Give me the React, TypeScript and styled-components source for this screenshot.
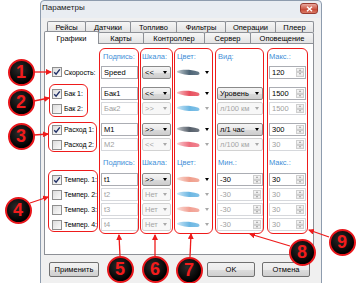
import React from "react";
import styled, { createGlobalStyle } from "styled-components";

const GlobalStyle = createGlobalStyle`
  html, body { margin: 0; padding: 0; background: #ffffff; }
  body { font-family: "Liberation Sans", Arial, sans-serif; color: #000; }
  * { box-sizing: border-box; }
`;

const Page = styled.div`
  position: relative;
  width: 364px;
  height: 283px;
  overflow: hidden;
  background: #fff;
`;

const Window = styled.div`
  margin-left: 40px;
  width: 282px;
  height: 300px;
  border: 1px solid #8e9cae;
  border-radius: 4px 4px 0 0;
  background: #e9edf2;
  display: flex;
  flex-direction: column;
`;

const TitleBar = styled.div`
  height: 17px;
  display: flex;
  align-items: flex-start;
  justify-content: space-between;
  padding: 2px 3px 0 1px;
  font-size: 8px;
  color: #1a1a1a;
`;

const TitleText = styled.span`
  line-height: 10px;
`;

const CloseButton = styled.div`
  width: 18px;
  height: 11px;
  border-radius: 3px;
  border: 1px solid #9a3b30;
  background: linear-gradient(#e9a99e, #d0604f 50%, #c4412e 51%, #d97a66);
  display: flex;
  align-items: center;
  justify-content: center;
`;

const Client = styled.div`
  flex: 1;
  padding: 3px 0 0 3px;
  display: flex;
  flex-direction: column;
  background: #f0f0f0;
`;

const TabRow = styled.div<{ $indent: number }>`
  display: flex;
  height: 11px;
  padding-left: ${(p) => p.$indent}px;
`;

const Tab = styled.div<{ $w: number; $active?: boolean }>`
  position: relative;
  z-index: ${(p) => (p.$active ? 2 : 1)};
  width: ${(p) => p.$w}px;
  height: ${(p) => (p.$active ? 13 : 11)}px;
  margin-top: ${(p) => (p.$active ? -1 : 0)}px;
  margin-right: -1px;
  border: 1px solid #8d9096;
  border-bottom: none;
  border-radius: 2px 2px 0 0;
  background: ${(p) => (p.$active ? "#ffffff" : "linear-gradient(#f6f6f6, #e3e3e3)")};
  font-size: 7.5px;
  display: flex;
  align-items: center;
  justify-content: center;
  white-space: nowrap;
`;

const Panel = styled.div`
  position: relative;
  z-index: 1;
  width: 270px;
  height: 212px;
  border: 1px solid #8d9096;
  background: #ffffff;
  padding: 4px 0 0 3px;
`;

const Grid = styled.div`
  display: grid;
  grid-template-columns: 51px 41px 34px 40px 52px 43px;
  grid-template-rows: 16px 16px 6px 15px 15px 6px 15px 15px 20px 15px 15px 15px 15px 2px;
`;

const Slot = styled.div<{ $row: number; $col: number; $pl?: number }>`
  grid-row: ${(p) => p.$row};
  grid-column: ${(p) => p.$col};
  display: flex;
  align-items: center;
  padding-left: ${(p) => p.$pl ?? 0}px;
  min-width: 0;
`;

const Header = styled.span`
  font-size: 7.5px;
  color: #3f8fd8;
  white-space: nowrap;
`;

const LabelCell = styled.label<{ $row: number }>`
  grid-row: ${(p) => p.$row};
  grid-column: 1;
  display: flex;
  align-items: center;
  gap: 2px;
  padding-left: 4px;
  font-size: 7px;
  letter-spacing: -0.1px;
  white-space: nowrap;
`;

const CheckBox = styled.span`
  width: 10px;
  height: 10px;
  flex: none;
  border: 1px solid #8f8f8f;
  background: linear-gradient(135deg, #dcdcdc, #fbfbfb);
  display: inline-flex;
  align-items: center;
  justify-content: center;
`;

const Callout = styled.div<{
  $rows: string;
  $col: number;
  $ml?: number;
  $w?: number;
  $mt?: number;
  $mb?: number;
}>`
  grid-row: ${(p) => p.$rows};
  grid-column: ${(p) => p.$col};
  margin: ${(p) => p.$mt ?? 0}px 0 ${(p) => p.$mb ?? 0}px ${(p) => p.$ml ?? 0}px;
  width: ${(p) => (p.$w ? `${p.$w}px` : "auto")};
  border: 1.5px solid #ee1b1b;
  border-radius: 6px;
  pointer-events: none;
  z-index: 3;
`;

const TextBox = styled.div<{ $on: boolean }>`
  margin-left: 2px;
  width: 37px;
  height: 13px;
  border: 1px solid ${(p) => (p.$on ? "#abadb3" : "#d6d8dc")};
  background: #fff;
  color: ${(p) => (p.$on ? "#000" : "#a0a0a0")};
  font-size: 7.5px;
  padding-left: 2px;
  display: flex;
  align-items: center;
`;

const Combo = styled.div<{ $on: boolean; $w: number; $ml: number }>`
  margin-left: ${(p) => p.$ml}px;
  width: ${(p) => p.$w}px;
  height: 13px;
  border: 1px solid ${(p) => (p.$on ? "#8a8a8a" : "#d2d2d2")};
  border-radius: 2px;
  background: ${(p) =>
    p.$on
      ? "linear-gradient(#f5f5f5 0%, #e9e9e9 50%, #dadada 51%, #cdcdcd 100%)"
      : "#f7f7f7"};
  color: ${(p) => (p.$on ? "#000" : "#a5a5a5")};
  font-size: 7.5px;
  display: flex;
  align-items: center;
  justify-content: space-between;
  padding: 0 3px 0 2px;
  white-space: nowrap;
`;

const DropArrow = styled.span<{ $on: boolean }>`
  width: 0;
  height: 0;
  flex: none;
  border-left: 2.5px solid transparent;
  border-right: 2.5px solid transparent;
  border-top: 3px solid ${(p) => (p.$on ? "#000" : "#a8a8a8")};
`;

const ColorPick = styled.div`
  margin-left: 2px;
  width: 36px;
  height: 13px;
  display: flex;
  align-items: center;
  justify-content: space-between;
  padding-right: 3px;
`;

const Spin = styled.div<{ $on: boolean; $w: number; $ml: number }>`
  margin-left: ${(p) => p.$ml}px;
  width: ${(p) => p.$w}px;
  height: 13px;
  border: 1px solid ${(p) => (p.$on ? "#abadb3" : "#d6d8dc")};
  background: #fff;
  color: ${(p) => (p.$on ? "#000" : "#a0a0a0")};
  font-size: 7.5px;
  display: flex;
  align-items: stretch;
`;

const SpinText = styled.span`
  flex: 1;
  padding-left: 2px;
  display: flex;
  align-items: center;
`;

const SpinButtons = styled.div`
  width: 8px;
  margin: 1px;
  display: flex;
  flex-direction: column;
`;

const SpinBtn = styled.span<{ $up?: boolean }>`
  flex: 1;
  border: 1px solid #cfcfcf;
  background: linear-gradient(#f7f7f7, #e6e6e6);
  display: flex;
  align-items: center;
  justify-content: center;
  &::after {
    content: "";
    width: 0;
    height: 0;
    border-left: 1.5px solid transparent;
    border-right: 1.5px solid transparent;
    ${(p) => (p.$up ? "border-bottom: 2px solid #9a9a9a;" : "border-top: 2px solid #9a9a9a;")}
  }
`;

const ButtonBar = styled.div`
  display: flex;
  width: 270px;
  margin-top: 7px;
  padding: 0 4px 0 5px;
  gap: 7px;
`;

const Button = styled.div<{ $push?: boolean; $w: number }>`
  margin-left: ${(p) => (p.$push ? "auto" : "0")};
  width: ${(p) => p.$w}px;
  height: 15px;
  border: 1px solid #707070;
  border-radius: 2px;
  background: linear-gradient(#f2f2f2 0%, #ebebeb 50%, #dddddd 51%, #cfcfcf 100%);
  font-size: 7.5px;
  display: flex;
  align-items: center;
  justify-content: center;
`;

const Overlay = styled.svg`
  position: absolute;
  left: 0;
  top: 0;
  pointer-events: none;
  z-index: 10;
`;

const Badge = styled.div<{ $x: number; $y: number }>`
  position: absolute;
  z-index: 11;
  left: ${(p) => p.$x - 13.5}px;
  top: ${(p) => p.$y - 13.5}px;
  width: 27px;
  height: 27px;
  border-radius: 50%;
  border: 2px solid #e8161b;
  background: radial-gradient(circle at 40% 35%, #2b2b2b, #000 70%);
  color: #f21c1c;
  font: bold 18px "Liberation Sans", Arial, sans-serif;
  display: flex;
  align-items: center;
  justify-content: center;
`;

type Row = {
  row: number;
  label: string;
  checked: boolean;
  sign: string;
  scale: string;
  color: string;
  on: boolean;
  kind?: string;
  min?: string;
  max: string;
};

const topRows: Row[] = [
  { row: 2, label: "Скорость:", checked: true, sign: "Speed", scale: "<<", color: "#4e6576", on: true, max: "120" },
  { row: 4, label: "Бак 1:", checked: true, sign: "Бак1", scale: "<<", color: "#e8505e", on: true, kind: "Уровень", max: "1500" },
  { row: 5, label: "Бак 2:", checked: false, sign: "Бак2", scale: ">>", color: "#6cb7e3", on: false, kind: "л/100 км", max: "1500" },
  { row: 7, label: "Расход 1:", checked: true, sign: "M1", scale: ">>", color: "#555f6a", on: true, kind: "л/1 час", max: "300" },
  { row: 8, label: "Расход 2:", checked: false, sign: "M2", scale: "<<", color: "#ee6f7e", on: false, kind: "л/100 км", max: "30" },
  { row: 10, label: "Темпер. 1:", checked: true, sign: "t1", scale: ">>", color: "#f09e8c", on: true, min: "-30", max: "30" },
  { row: 11, label: "Темпер. 2:", checked: false, sign: "t2", scale: "Нет", color: "#6cb7e3", on: false, min: "-30", max: "30" },
  { row: 12, label: "Темпер. 3:", checked: false, sign: "t3", scale: "Нет", color: "#f2a093", on: false, min: "-30", max: "30" },
  { row: 13, label: "Темпер. 4:", checked: false, sign: "t4", scale: "Нет", color: "#6cb7e3", on: false, min: "-30", max: "30" },
];

const tabs1 = [
  { t: "Рейсы", w: 39 },
  { t: "Датчики", w: 46 },
  { t: "Топливо", w: 47 },
  { t: "Фильтры", w: 50 },
  { t: "Операции", w: 51 },
  { t: "Плеер", w: 39 },
];
const tabs2 = [
  { t: "Графики", w: 55, a: true },
  { t: "Карты", w: 46 },
  { t: "Контроллер", w: 62 },
  { t: "Сервер", w: 47 },
  { t: "Оповещение", w: 64 },
];

const Blob: React.FC<{ color: string; id: string }> = ({ color, id }) => (
  <svg width="25" height="9" viewBox="0 0 25 9">
    <defs>
      <linearGradient id={id} x1="0" y1="0" x2="1" y2="0">
        <stop offset="0" stopColor={color} stopOpacity="0.35" />
        <stop offset="0.55" stopColor={color} stopOpacity="1" />
        <stop offset="1" stopColor={color} stopOpacity="0.85" />
      </linearGradient>
      <filter id={id + "f"} x="-20%" y="-40%" width="140%" height="180%">
        <feGaussianBlur stdDeviation="0.45" />
      </filter>
    </defs>
    <path
      d="M1 3.2 C 6 1.2, 15 1.6, 21.5 3.4 C 24 4.1, 24.3 6.6, 21.5 6.9 C 14 7.6, 6 6.2, 1.3 4.4 Z"
      fill={`url(#${id})`}
      filter={`url(#${id}f)`}
    />
  </svg>
);

const Check: React.FC = () => (
  <svg width="8" height="8" viewBox="0 0 8 8">
    <path d="M1.2 4.2 L3.1 6.2 L6.8 1.4" fill="none" stroke="#1f2f66" strokeWidth="1.4" />
  </svg>
);

const SpinBox: React.FC<{ value: string; on: boolean; w: number; ml: number }> = ({ value, on, w, ml }) => (
  <Spin $on={on} $w={w} $ml={ml}>
    <SpinText>{value}</SpinText>
    <SpinButtons>
      <SpinBtn $up />
      <SpinBtn />
    </SpinButtons>
  </Spin>
);

const badges = [
  { n: "1", x: 21, y: 72 },
  { n: "2", x: 21, y: 102 },
  { n: "3", x: 21, y: 136 },
  { n: "4", x: 18, y: 210 },
  { n: "5", x: 120, y: 269 },
  { n: "6", x: 155, y: 269 },
  { n: "7", x: 189, y: 270 },
  { n: "8", x: 302, y: 252 },
  { n: "9", x: 342, y: 242 },
];

const arrows = [
  [34, 72, 51, 72],
  [34, 101, 49, 98],
  [34, 135, 48, 134],
  [30, 203, 48, 197],
  [120, 256, 119, 235],
  [155, 256, 155, 235],
  [190, 257, 191, 234],
  [290, 246, 250, 234],
  [329, 237, 309, 230],
];

export default function App() {
  return (
    <Page>
      <GlobalStyle />
      <Window>
        <TitleBar>
          <TitleText>Параметры</TitleText>
          <CloseButton>
            <svg width="7" height="6" viewBox="0 0 7 6">
              <path d="M1 0.8 L6 5.2 M6 0.8 L1 5.2" stroke="#fff" strokeWidth="1.5" />
            </svg>
          </CloseButton>
        </TitleBar>
        <Client>
          <TabRow $indent={3}>
            {tabs1.map((t) => (
              <Tab key={t.t} $w={t.w}>
                {t.t}
              </Tab>
            ))}
          </TabRow>
          <TabRow $indent={0}>
            {tabs2.map((t) => (
              <Tab key={t.t} $w={t.w} $active={t.a}>
                {t.t}
              </Tab>
            ))}
          </TabRow>
          <Panel>
            <Grid>
              {[1, 9].map((r) => (
                <React.Fragment key={r}>
                  <Slot $row={r} $col={2} $pl={4}>
                    <Header>Подпись:</Header>
                  </Slot>
                  <Slot $row={r} $col={3} $pl={2}>
                    <Header>Шкала:</Header>
                  </Slot>
                  <Slot $row={r} $col={4} $pl={3}>
                    <Header>Цвет:</Header>
                  </Slot>
                  <Slot $row={r} $col={5} $pl={4}>
                    <Header>{r === 1 ? "Вид:" : "Мин.:"}</Header>
                  </Slot>
                  <Slot $row={r} $col={6} $pl={3}>
                    <Header>Макс.:</Header>
                  </Slot>
                </React.Fragment>
              ))}

              {topRows.map((r, i) => (
                <React.Fragment key={r.label}>
                  <LabelCell $row={r.row}>
                    <CheckBox>{r.checked && <Check />}</CheckBox>
                    {r.label}
                  </LabelCell>
                  <Slot $row={r.row} $col={2}>
                    <TextBox $on={r.on}>{r.sign}</TextBox>
                  </Slot>
                  <Slot $row={r.row} $col={3}>
                    <Combo $on={r.on} $w={29} $ml={2}>
                      <span>{r.scale}</span>
                      <DropArrow $on={r.on} />
                    </Combo>
                  </Slot>
                  <Slot $row={r.row} $col={4}>
                    <ColorPick>
                      <Blob color={r.color} id={`blob${i}`} />
                      <DropArrow $on={r.on} />
                    </ColorPick>
                  </Slot>
                  <Slot $row={r.row} $col={5}>
                    {r.kind && (
                      <Combo $on={r.on} $w={46} $ml={3}>
                        <span>{r.kind}</span>
                        <DropArrow $on={r.on} />
                      </Combo>
                    )}
                    {r.min && <SpinBox value={r.min} on={r.on} w={46} ml={3} />}
                  </Slot>
                  <Slot $row={r.row} $col={6}>
                    <SpinBox value={r.max} on={r.on} w={37} ml={3} />
                  </Slot>
                </React.Fragment>
              ))}

              <Callout $rows="4 / 6" $col={1} $ml={1} $w={39} $mt={-2} $mb={-1} />
              <Callout $rows="7 / 9" $col={1} $w={49} />
              <Callout $rows="10 / 14" $col={1} $w={50} $mt={-2} />
              <Callout $rows="1 / 15" $col={2} $w={40} />
              <Callout $rows="1 / 15" $col={3} $w={33} />
              <Callout $rows="1 / 15" $col={4} $w={39} />
              <Callout $rows="1 / 15" $col={5} $ml={1} $w={49} />
              <Callout $rows="1 / 15" $col={6} $ml={1} $w={41} />
            </Grid>
          </Panel>
          <ButtonBar>
            <Button $w={50}>Применить</Button>
            <Button $w={48} $push>
              OK
            </Button>
            <Button $w={48}>Отмена</Button>
          </ButtonBar>
        </Client>
      </Window>

      <Overlay width="364" height="283" viewBox="0 0 364 283">
        <defs>
          <marker
            id="ah"
            markerWidth="6"
            markerHeight="6"
            refX="5"
            refY="3"
            orient="auto"
            markerUnits="userSpaceOnUse"
          >
            <path d="M0,0 L6,3 L0,6 z" fill="#ee1b1b" />
          </marker>
        </defs>
        {arrows.map(([x1, y1, x2, y2], i) => (
          <line
            key={i}
            x1={x1}
            y1={y1}
            x2={x2}
            y2={y2}
            stroke="#ee1b1b"
            strokeWidth="1.3"
            markerEnd="url(#ah)"
          />
        ))}
      </Overlay>
      {badges.map((b) => (
        <Badge key={b.n} $x={b.x} $y={b.y}>
          {b.n}
        </Badge>
      ))}
    </Page>
  );
}
